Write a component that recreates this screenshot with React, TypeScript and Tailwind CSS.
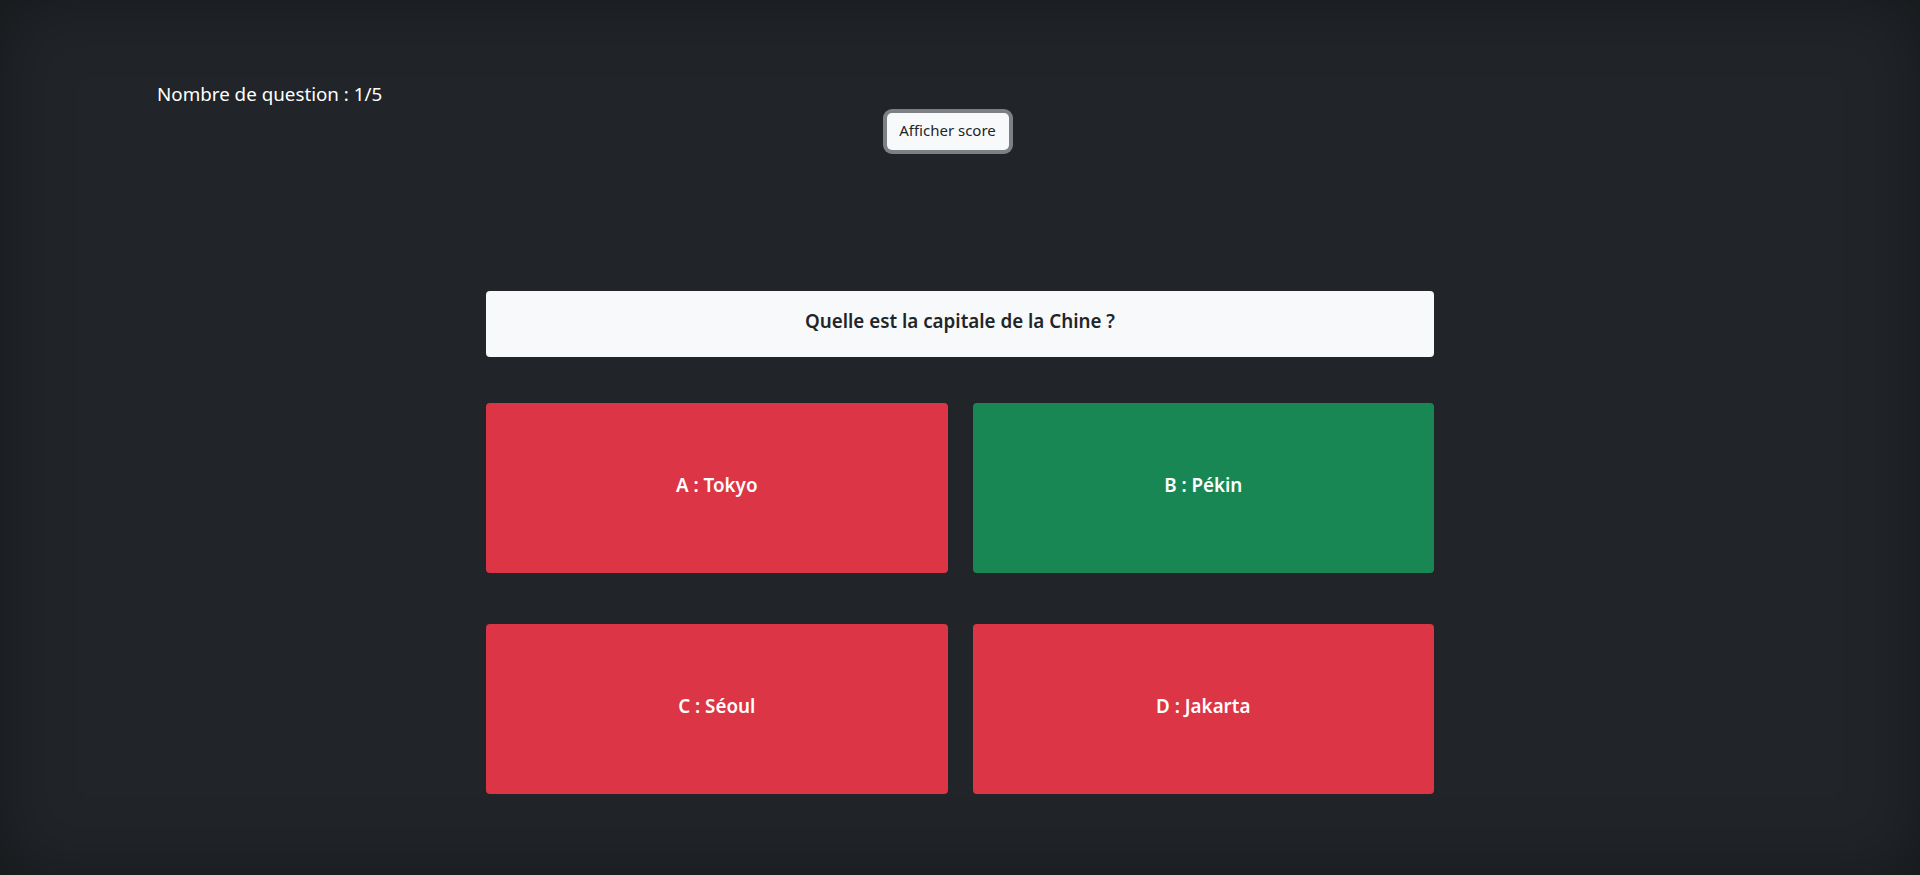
import React from 'react';

interface Answer {
  letter: string;
  label: string;
  correct: boolean;
}

const answers: Answer[] = [
  { letter: 'A', label: 'Tokyo', correct: false },
  { letter: 'B', label: 'Pékin', correct: true },
  { letter: 'C', label: 'Séoul', correct: false },
  { letter: 'D', label: 'Jakarta', correct: false },
];

const App: React.FC = () => {
  return (
    <div
      className="relative min-h-screen h-[875px] overflow-hidden bg-[#212529] text-white shadow-[inset_0_0_70px_rgba(0,0,0,0.35)]"
      style={{ fontFamily: '"Noto Sans", "Open Sans", sans-serif' }}
    >
      {/* Header */}
      <div className="pl-[157px] pt-[83px] text-[18.8px] leading-[22px] text-white">
        Nombre de question : 1/5
      </div>

      <div className="mt-[8px] flex justify-center pr-[25px]">
        <button className="h-[37px] w-[122px] rounded-[5px] bg-[#f8f9fa] pb-[2px] text-[15px] text-[#212529] shadow-[0_0_0_4px_#7d8084]">
          Afficher score
        </button>
      </div>

      {/* Question */}
      <div className="mx-auto mt-[141px] flex h-[66px] w-[948px] items-center justify-center rounded-[4px] bg-[#f8f9fa] pb-[5px] text-[18.8px] font-semibold text-[#212529]">
        Quelle est la capitale de la Chine ?
      </div>

      {/* Answers */}
      <div className="mx-auto mt-[46px] grid w-[948px] grid-cols-2 gap-x-[25px] gap-y-[51px]">
        {answers.map((a) => (
          <div
            key={a.letter}
            className={`flex h-[170px] items-center justify-center rounded-[4px] pb-[5px] text-[18.8px] font-semibold text-white ${
              a.correct ? 'bg-[#198754]' : 'bg-[#dc3545]'
            }`}
          >
            {a.letter} : {a.label}
          </div>
        ))}
      </div>
    </div>
  );
};

export default App;
